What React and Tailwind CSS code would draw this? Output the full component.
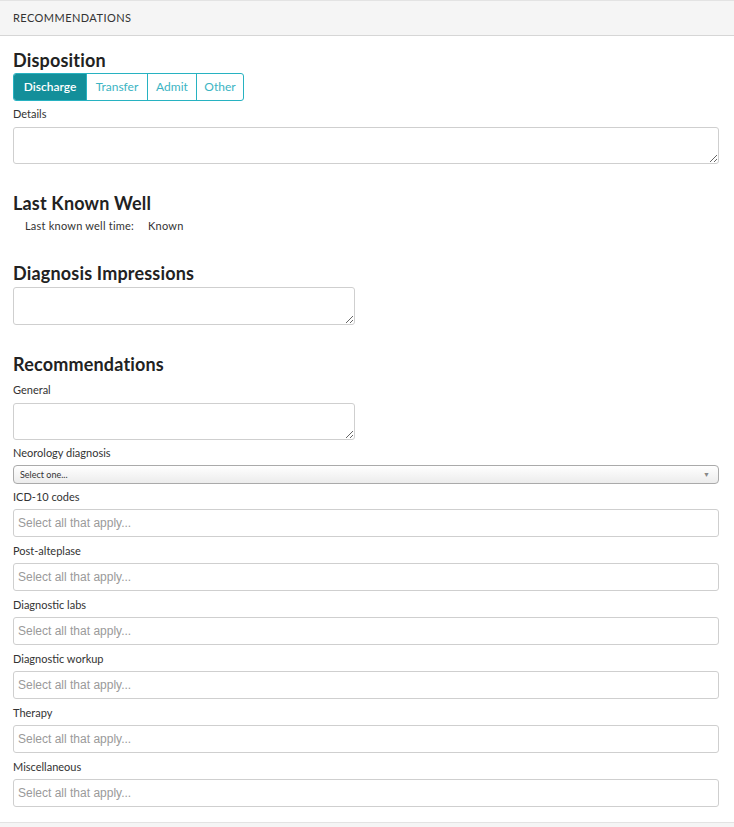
import React from "react";

function Label({ children, className = "mt-[5px]" }) {
  return (
    <div className={"h-[16px] leading-[16px] text-[11px] text-[#333] " + className}>
      {children}
    </div>
  );
}

function Heading({ children, className = "" }) {
  return (
    <h2 className={"h-[22px] leading-[22px] text-[18px] font-bold text-[#222] tracking-[0.01em] " + className}>
      {children}
    </h2>
  );
}

function MultiInput() {
  return (
    <div className="mt-[4px] h-[28px] w-full rounded-[3px] border border-[#cfcfcf] bg-white flex items-center pl-[4px]">
      <input
        placeholder="Select all that apply..."
        className="w-full outline-none bg-transparent text-[12px] font-['Liberation_Sans',Arial,sans-serif] placeholder:text-[#9a9a9a] text-[#333]"
      />
    </div>
  );
}

export default function App() {
  const fields = [
    "ICD-10 codes",
    "Post-alteplase",
    "Diagnostic labs",
    "Diagnostic workup",
    "Therapy",
    "Miscellaneous",
  ];
  return (
    <div className="w-[734px] min-h-[827px] bg-white font-['Lato',sans-serif] text-[#333] flex flex-col">
      <div className="h-[36px] bg-[#f5f5f5] border-t border-t-[#e3e3e3] border-b border-b-[#d6d6d6] px-[13px] flex items-center text-[11px] tracking-[0.04em] uppercase text-[#333]">
        Recommendations
      </div>
      <div className="pl-[13px] pr-[15px] pt-[13px] pb-[15px] flex flex-col">
        <Heading>Disposition</Heading>
        <div className="mt-[2px] flex h-[28px] w-max rounded-[3px] border border-[#27b2c1] overflow-hidden text-[12px]">
          <button className="w-[72px] bg-[#138f9a] text-white font-semibold">Discharge</button>
          <button className="w-[61px] border-l border-[#27b2c1] text-[#3cb4c3]">Transfer</button>
          <button className="w-[49px] border-l border-[#27b2c1] text-[#3cb4c3]">Admit</button>
          <button className="w-[47px] border-l border-[#27b2c1] text-[#3cb4c3]">Other</button>
        </div>
        <Label>Details</Label>
        <textarea className="mt-[5px] h-[37px] w-full rounded-[3px] border border-[#cfcfcf] outline-none block" />

        <Heading className="mt-[28px]">Last Known Well</Heading>
        <div className="mt-[4px] pl-[12px] h-[16px] leading-[16px] text-[11px] text-[#333] flex tracking-[0.02em]">
          <span>Last known well time:</span>
          <span className="ml-[14px]">Known</span>
        </div>

        <Heading className="mt-[28px]">Diagnosis Impressions</Heading>
        <textarea className="mt-[3px] h-[38px] w-[342px] rounded-[3px] border border-[#cfcfcf] outline-none block" />

        <Heading className="mt-[28px]">Recommendations</Heading>
        <Label className="mt-[7px]">General</Label>
        <textarea className="mt-[5px] h-[37px] w-[342px] rounded-[3px] border border-[#cfcfcf] outline-none block" />

        <Label>Neorology diagnosis</Label>
        <div className="mt-[4px] h-[19px] w-full rounded-[4px] border border-[#aaaaaa] bg-gradient-to-b from-white to-[#ececec] flex items-center justify-between px-[6px]">
          <span className="text-[9px] text-[#333]">Select one...</span>
          <span className="text-[7px] text-[#888] mr-[2px]">▼</span>
        </div>

        {fields.map((f, i) => (
          <React.Fragment key={f}>
            <Label className={i === 0 ? "mt-[5px]" : "mt-[6px]"}>{f}</Label>
            <MultiInput />
          </React.Fragment>
        ))}
      </div>
      <div className="flex-1 min-h-[6px] bg-[#f5f5f5] border-t border-t-[#e3e3e3]" />
    </div>
  );
}
